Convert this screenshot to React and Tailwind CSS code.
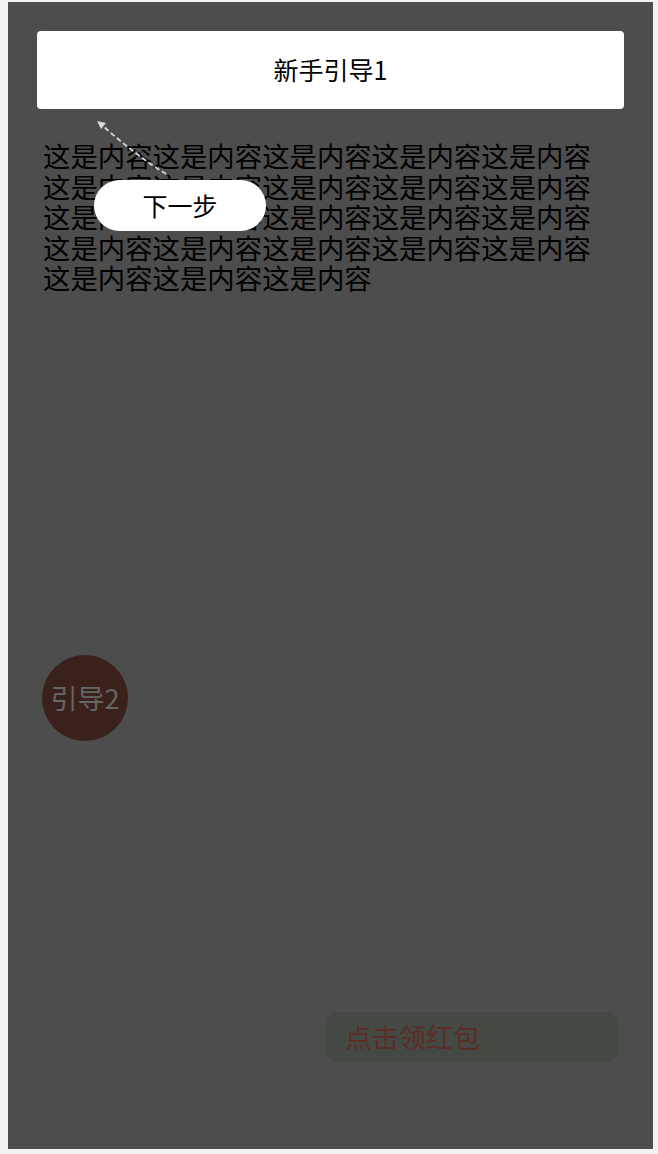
import React from "react";

const content = "这是内容".repeat(23);

const GuideArrow = () => (
  <svg
    className="absolute left-0 top-0 pointer-events-none"
    width="200"
    height="200"
    viewBox="0 0 200 200"
  >
    <path
      d="M158 172 Q126 152 94 123"
      fill="none"
      stroke="#d9d9d9"
      strokeWidth="1.8"
      strokeDasharray="5 3"
    />
    <path d="M89 119 L98 121 L93 127 Z" fill="#d9d9d9" />
  </svg>
);

const App = () => {
  return (
    <div className="h-[1154px] w-[658px] bg-[#f3f3f3] pl-[8px] pt-[2px] pr-[5px] pb-[5px] font-['Noto_Sans_CJK_SC',sans-serif]">
      <div className="relative h-full w-full bg-[#4d4d4d] pt-[29px]">
        <div className="mx-[29px] flex h-[78px] items-center justify-center rounded-[4px] bg-white text-[25px] text-black">
          新手引导1
        </div>
        <p className="mt-[31px] ml-[35px] w-[560px] break-all text-[27.4px] leading-[30.5px] text-black">
          {content}
        </p>

        <GuideArrow />

        <button className="absolute left-[86px] top-[178px] flex h-[51px] w-[172px] items-center justify-center rounded-full bg-white text-[25px] text-black">
          下一步
        </button>

        <div className="absolute left-[34px] top-[653px] flex h-[86px] w-[86px] items-center justify-center rounded-full bg-[#3b211b] text-[27px] text-[#666666]">
          引导2
        </div>

        <div className="absolute left-[318px] top-[1010px] flex h-[50px] w-[292px] items-center rounded-[12px] bg-[#454944] pl-[19px] text-[27px] text-[#5b2d24]">
          点击领红包
        </div>
      </div>
    </div>
  );
};

export default App;
